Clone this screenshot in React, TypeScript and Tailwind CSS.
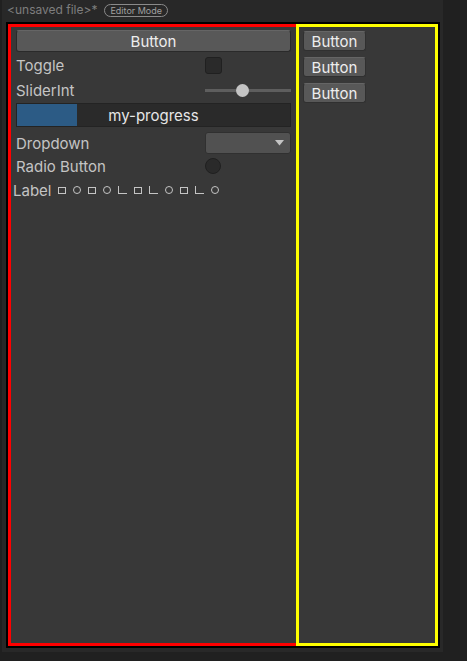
import React from "react";

const Glyph = ({ kind }: { kind: "s" | "c" | "l" }) => {
  if (kind === "s")
    return <span className="inline-block w-[8px] h-[7px] border border-[#c4c4c4]" />;
  if (kind === "c")
    return <span className="inline-block w-[8px] h-[8px] rounded-full border border-[#c4c4c4]" />;
  return <span className="inline-block w-[9px] h-[8px] border-l border-b border-[#c4c4c4]" />;
};

const SmallButton = () => (
  <div className="w-[63px] h-[20px] rounded-[3px] bg-[#585858] border border-[#303030] border-t-[#656565] flex items-center justify-center text-[15px] text-[#eeeeee] leading-none">
    Button
  </div>
);

export default function App() {
  const glyphs: ("s" | "c" | "l")[] = ["s", "c", "s", "c", "l", "s", "l", "c", "s", "l", "c"];
  return (
    <div
      className="w-[467px] h-[661px] bg-[#202020] overflow-hidden"
      style={{ fontFamily: "Inter, 'Noto Sans', sans-serif" }}
    >
      <div className="ml-[2px] w-[441px] h-[652px] bg-[#282828] flex flex-col pl-[4px] pr-[3px] pb-[4px]">
        <div className="h-[22px] flex items-center gap-[7px] pl-[1px] pb-[2px]">
          <span className="text-[12px] text-[#7e7e7e] leading-none">&lt;unsaved file&gt;*</span>
          <span className="h-[13px] px-[5px] rounded-full border border-[#8a8a8a] text-[9px] text-[#a0a0a0] leading-none flex items-center">
            Editor Mode
          </span>
        </div>
        <div className="flex-1 border-2 border-black flex bg-[#383838]">
          <div className="w-[288px] border-[3px] border-r-0 border-[#ff0000] bg-[#383838] flex flex-col">
            <div className="mt-[3px] mx-[5px] h-[22px] rounded-[3px] bg-[#585858] border border-[#2a2a2a] border-t-[#656565] flex items-center justify-center text-[15px] text-[#eeeeee] leading-none">
              Button
            </div>
            <div className="h-[26px] flex items-center pl-[5px] pr-[2px]">
              <span className="w-[189px] text-[15px] text-[#c4c4c4] leading-none">Toggle</span>
              <span className="w-[17px] h-[17px] rounded-[3px] bg-[#2a2a2a] border border-[#202020]" />
            </div>
            <div className="h-[24px] flex items-center pl-[5px]">
              <span className="w-[189px] text-[15px] text-[#c4c4c4] leading-none">SliderInt</span>
              <div className="relative w-[86px] h-[13px] flex items-center">
                <div className="w-full h-[3px] bg-[#5e5e5e]" />
                <div className="absolute left-[31px] top-0 w-[13px] h-[13px] rounded-full bg-[#c4c4c4]" />
              </div>
            </div>
            <div className="mt-[1px] mx-[5px] h-[24px] relative bg-[#2a2a2a] border border-[#232323] flex items-center justify-center">
              <div className="absolute left-0 top-0 bottom-0 w-[60px] bg-[#2c5b85]" />
              <span className="relative text-[15px] text-[#e6e6e6] leading-none">my-progress</span>
            </div>
            <div className="mt-[5px] h-[22px] flex items-center pl-[5px]">
              <span className="w-[189px] text-[15px] text-[#c4c4c4] leading-none">Dropdown</span>
              <div className="w-[86px] h-[22px] rounded-[3px] bg-[#515151] border border-[#303030] flex items-center justify-end pr-[6px]">
                <svg width="9" height="6" viewBox="0 0 9 6">
                  <path d="M0 0 L9 0 L4.5 5.5 Z" fill="#c4c4c4" />
                </svg>
              </div>
            </div>
            <div className="h-[24px] flex items-center pl-[5px]">
              <span className="w-[189px] text-[15px] text-[#c4c4c4] leading-none">Radio Button</span>
              <span className="w-[16px] h-[16px] rounded-full bg-[#2a2a2a] border border-[#202020]" />
            </div>
            <div className="h-[24px] flex items-center pl-[2px]">
              <span className="text-[15px] text-[#c4c4c4] leading-none mr-[7px]">Label</span>
              <div className="flex items-center gap-[7px]">
                {glyphs.map((g, i) => (
                  <Glyph key={i} kind={g} />
                ))}
              </div>
            </div>
          </div>
          <div className="flex-1 border-[3px] border-[#ffff00] bg-[#383838] flex flex-col gap-[6px] pt-[4px] pl-[4px]">
            <SmallButton />
            <SmallButton />
            <SmallButton />
          </div>
        </div>
      </div>
    </div>
  );
}
